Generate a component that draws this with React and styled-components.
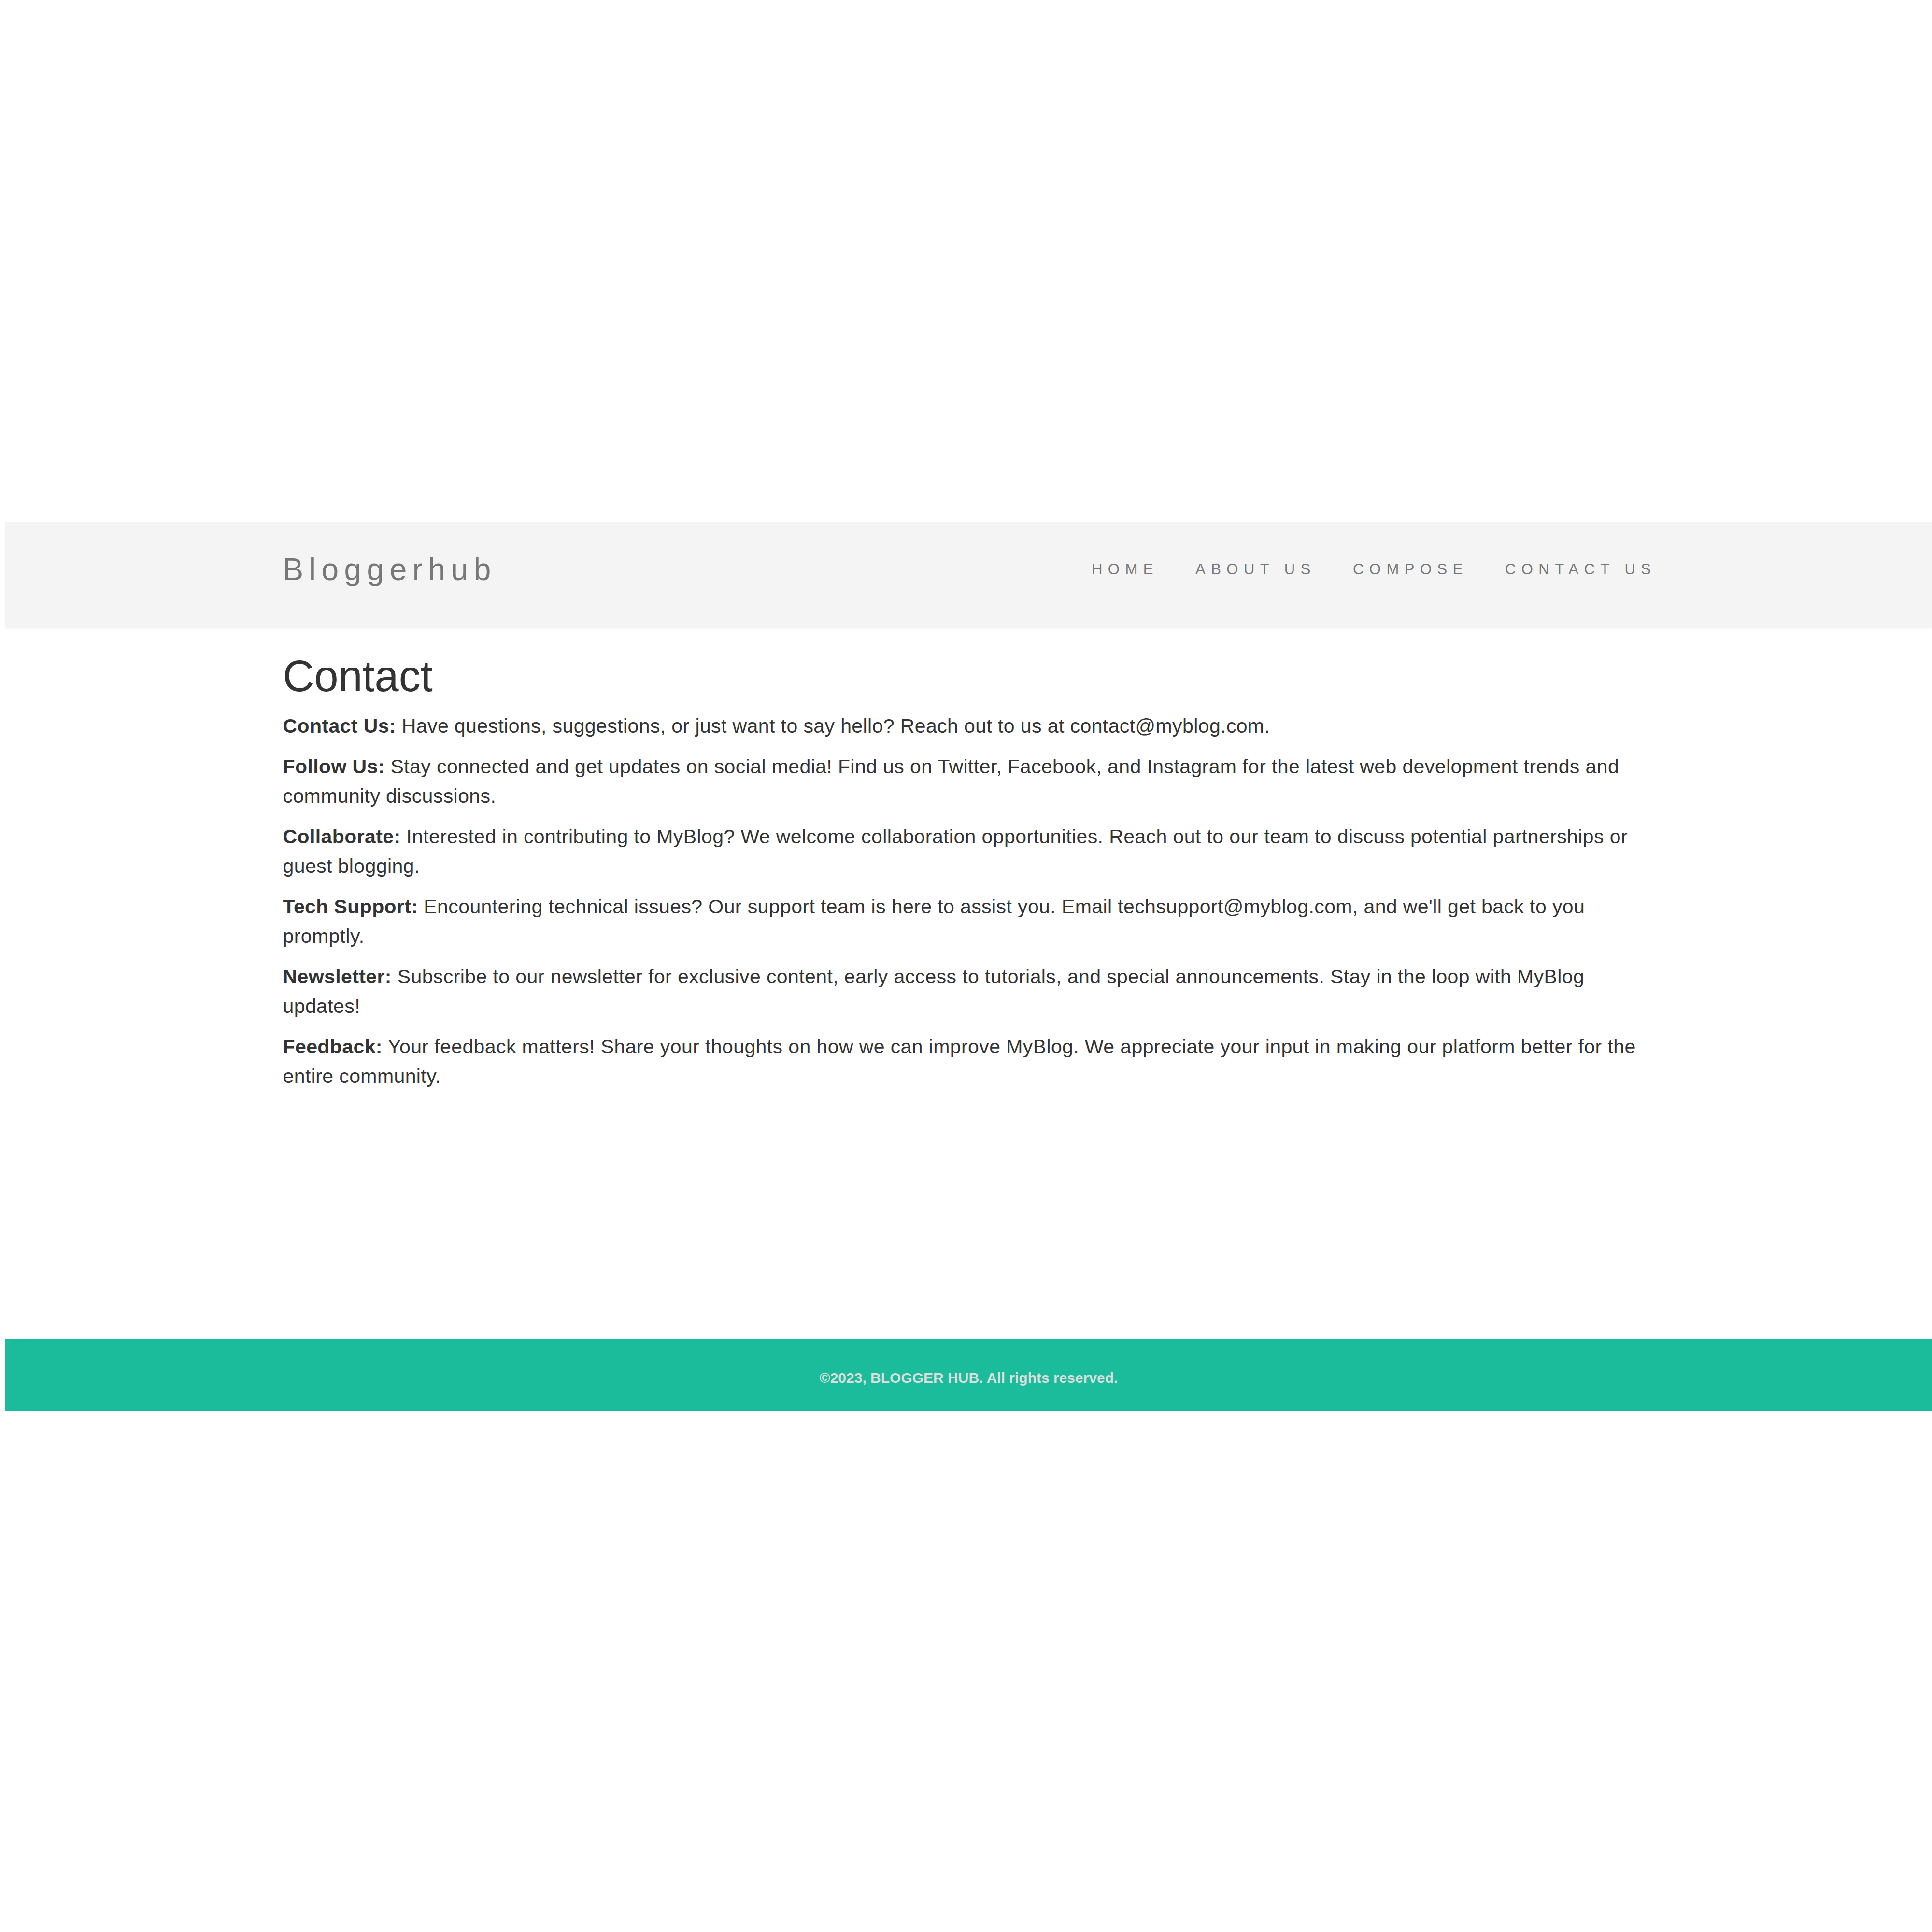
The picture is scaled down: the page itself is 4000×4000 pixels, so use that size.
import styled, { createGlobalStyle } from 'styled-components';

const GlobalStyle = createGlobalStyle`
    html, body {
        margin: 0;
        padding: 0;
        background: #ffffff;
    }
    body {
        font-family: "Liberation Sans", Arial, Helvetica, sans-serif;
        color: #333333;
    }
`;

const sections = [
    { label: 'Contact Us:', text: 'Have questions, suggestions, or just want to say hello? Reach out to us at contact@myblog.com.' },
    { label: 'Follow Us:', text: 'Stay connected and get updates on social media! Find us on Twitter, Facebook, and Instagram for the latest web development trends and community discussions.' },
    { label: 'Collaborate:', text: 'Interested in contributing to MyBlog? We welcome collaboration opportunities. Reach out to our team to discuss potential partnerships or guest blogging.' },
    { label: 'Tech Support:', text: "Encountering technical issues? Our support team is here to assist you. Email techsupport@myblog.com, and we'll get back to you promptly." },
    { label: 'Newsletter:', text: 'Subscribe to our newsletter for exclusive content, early access to tutorials, and special announcements. Stay in the loop with MyBlog updates!' },
    { label: 'Feedback:', text: 'Your feedback matters! Share your thoughts on how we can improve MyBlog. We appreciate your input in making our platform better for the entire community.' }
];

const links = ['HOME', 'ABOUT US', 'COMPOSE', 'CONTACT US'];

export default function App() {
    return (
        <>
            <GlobalStyle />
            <Page>
                <Navbar>
                    <NavInner>
                        <Brand href='#'>Bloggerhub</Brand>
                        <NavList>
                            {links.map(link =>
                                <NavItem key={link}>
                                    <NavLink href='#'>{link}</NavLink>
                                </NavItem>
                            )}
                        </NavList>
                    </NavInner>
                </Navbar>
                <Main>
                    <Container>
                        <Title>Contact</Title>
                        {sections.map(section =>
                            <Paragraph key={section.label}>
                                <strong>{section.label}</strong> {section.text}
                            </Paragraph>
                        )}
                    </Container>
                </Main>
                <Footer>
                    <FooterText>©2023, BLOGGER HUB. All rights reserved.</FooterText>
                </Footer>
            </Page>
        </>
    );
}

const Page = styled.div`
    padding: 1080px 0 0 11px;
    min-height: 4000px;
    box-sizing: border-box;
`;

const Navbar = styled.nav`
    background: #f4f4f4;
    height: 220px;
    box-sizing: border-box;
    padding-bottom: 22px;
    display: flex;
    align-items: center;
    box-shadow: 0 3px 4px rgba(0, 0, 0, 0.03);
`;

const Container = styled.div`
    width: 2840px;
    margin: 0 auto;
`;

const NavInner = styled(Container)`
    display: flex;
    justify-content: space-between;
    align-items: center;
`;

const Brand = styled.a`
    font-size: 64px;
    letter-spacing: 11.5px;
    color: #777777;
    text-decoration: none;
`;

const NavList = styled.ul`
    display: flex;
    gap: 76px;
    list-style: none;
    margin: 0 -4px 0 0;
    padding: 0;
`;

const NavItem = styled.li`
    display: block;
`;

const NavLink = styled.a`
    font-size: 31px;
    letter-spacing: 11.5px;
    color: #777777;
    text-decoration: none;
`;

const Main = styled.main`
    min-height: 1472px;
    padding-top: 52px;
    box-sizing: border-box;
`;

const Title = styled.h1`
    font-size: 90px;
    font-weight: 500;
    line-height: 97px;
    margin: 0 0 24px;
    color: #333333;
`;

const Paragraph = styled.p`
    font-size: 41px;
    line-height: 61px;
    letter-spacing: 0.4px;
    margin: 0 0 23px;
    color: #333333;

    strong {
        font-weight: 700;
    }
`;

const Footer = styled.footer`
    background: #1abc9c;
    height: 149px;
    box-sizing: border-box;
    padding-top: 64px;
    text-align: center;
`;

const FooterText = styled.p`
    margin: 0;
    font-size: 30px;
    font-weight: 700;
    line-height: 34px;
    color: #dddddd;
`;
